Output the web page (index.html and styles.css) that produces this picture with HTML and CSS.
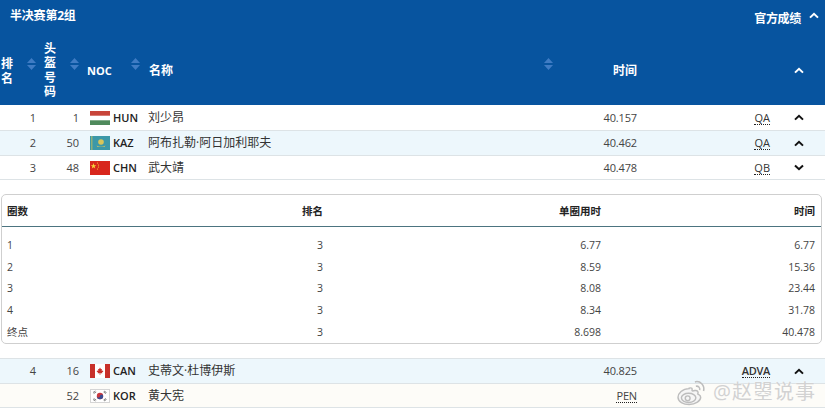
FILE: index.html
```html
<!DOCTYPE html>
<html lang="zh">
<head>
<meta charset="utf-8">
<title>半决赛第2组</title>
<link rel="stylesheet" href="styles.css">
</head>
<body>
<svg class="defs" width="0" height="0" aria-hidden="true">
  <symbol id="up" viewBox="0 0 10 7"><path d="M1 5.6 5 1.8l4 3.8" fill="none" stroke="currentColor" stroke-width="2"/></symbol>
  <symbol id="down" viewBox="0 0 10 7"><path d="M1 1.4 5 5.2l4-3.8" fill="none" stroke="currentColor" stroke-width="2"/></symbol>
  <symbol id="sort" viewBox="0 0 9 12"><path class="s-up" d="M4.5 0 9 5H0z"/><path class="s-down" d="M0 7h9l-4.500 5z"/></symbol>
</svg>
<main class="results">
  <header class="head">
    <div class="title-row">
      <h1 class="title">半决赛第2组</h1>
      <div class="official">官方成绩<svg class="chev chev-official"><use href="#up"/></svg></div>
    </div>
    <div class="col-row">
      <div class="th-rank">排名</div>
      <svg class="sort sort-active sort-a"><use href="#sort"/></svg>
      <div class="th-bib">头盔号码</div>
      <svg class="sort sort-b"><use href="#sort"/></svg>
      <div class="th-noc">NOC</div>
      <svg class="sort sort-c"><use href="#sort"/></svg>
      <div class="th-name">名称</div>
      <svg class="sort sort-d"><use href="#sort"/></svg>
      <div class="th-time">时间</div>
      <div class="cell-chev"><svg class="chev"><use href="#up"/></svg></div>
    </div>
  </header>

  <div class="row row-first">
    <div class="c-rank">1</div><div class="c-bib">1</div>
    <div class="c-flag"><svg class="flag" viewBox="0 0 20 14"><rect width="20" height="14" fill="#fff"/><rect width="20" height="4.700" fill="#c8453a"/><rect y="9.300" width="20" height="4.700" fill="#4f8a5c"/></svg></div>
    <div class="c-noc">HUN</div><div class="c-name">刘少昂</div><div class="c-time">40.157</div>
    <div class="c-code"><span class="abbr">QA</span></div>
    <div class="cell-chev"><svg class="chev"><use href="#up"/></svg></div>
  </div>
  <div class="row row-alt">
    <div class="c-rank">2</div><div class="c-bib">50</div>
    <div class="c-flag"><svg class="flag" viewBox="0 0 20 14"><rect width="20" height="14" fill="#3c98a8"/><rect x="1" width="1.500" height="14" fill="#8fb07a"/><circle cx="11" cy="6" r="2.800" fill="#d8c55a"/><path d="M6.500 9.500q4.500 2.500 9 0l-1 1.500h-7z" fill="#c9c263"/></svg></div>
    <div class="c-noc">KAZ</div><div class="c-name">阿布扎勒·阿日加利耶夫</div><div class="c-time">40.462</div>
    <div class="c-code"><span class="abbr">QA</span></div>
    <div class="cell-chev"><svg class="chev"><use href="#up"/></svg></div>
  </div>
  <div class="row row-short">
    <div class="c-rank">3</div><div class="c-bib">48</div>
    <div class="c-flag"><svg class="flag" viewBox="0 0 20 14"><rect width="20" height="14" fill="#d8261c"/><path d="M3.500 2 4.200 4.200 6.300 4.200 4.600 5.500 5.200 7.600 3.500 6.300 1.800 7.600 2.400 5.500.7 4.200 2.800 4.200z" fill="#f5d63a"/><circle cx="7.500" cy="2" r=".6" fill="#f5d63a"/><circle cx="8.500" cy="4" r=".6" fill="#f5d63a"/><circle cx="8.500" cy="6" r=".6" fill="#f5d63a"/><circle cx="7.500" cy="8" r=".6" fill="#f5d63a"/></svg></div>
    <div class="c-noc">CHN</div><div class="c-name">武大靖</div><div class="c-time">40.478</div>
    <div class="c-code"><span class="abbr">QB</span></div>
    <div class="cell-chev"><svg class="chev"><use href="#down"/></svg></div>
  </div>

  <section class="laps">
    <div class="lap lap-head"><div>圈数</div><div>排名</div><div>单圈用时</div><div>时间</div></div>
    <div class="lap-body">
      <div class="lap"><div>1</div><div>3</div><div>6.77</div><div>6.77</div></div>
      <div class="lap"><div>2</div><div>3</div><div>8.59</div><div>15.36</div></div>
      <div class="lap"><div>3</div><div>3</div><div>8.08</div><div>23.44</div></div>
      <div class="lap"><div>4</div><div>3</div><div>8.34</div><div>31.78</div></div>
      <div class="lap"><div>终点</div><div>3</div><div>8.698</div><div>40.478</div></div>
    </div>
  </section>

  <div class="row row-alt row-top">
    <div class="c-rank">4</div><div class="c-bib">16</div>
    <div class="c-flag"><svg class="flag" viewBox="0 0 20 14"><rect width="20" height="14" fill="#fff"/><rect width="5" height="14" fill="#c8302a"/><rect x="15" width="5" height="14" fill="#c8302a"/><path d="M10 3.500l1 1.800 1-.4-.3 2.100 1.300-.6.300 1-1.300 1 .3.800H10.300V11H9.700V9.200H7.700l.3-.8-1.300-1 .3-1 1.300.6-.3-2.100 1 .4z" fill="#c8302a"/></svg></div>
    <div class="c-noc">CAN</div><div class="c-name">史蒂文·杜博伊斯</div><div class="c-time">40.825</div>
    <div class="c-code"><span class="abbr abbr-strong">ADVA</span></div>
    <div class="cell-chev"><svg class="chev"><use href="#up"/></svg></div>
  </div>
  <div class="row row-warm">
    <div class="c-rank"></div><div class="c-bib">52</div>
    <div class="c-flag"><svg class="flag flag-kor" viewBox="0 0 20 14"><rect width="20" height="14" fill="#fff"/><circle cx="10" cy="7" r="3.200" fill="#c9383f"/><path d="M6.800 7a3.200 3.200 0 0 0 6.400 0 1.600 1.600 0 0 0-3.200 0 1.600 1.600 0 0 1-3.200 0z" fill="#3a4d92"/><path d="M3 3.500 5.500 2M3.700 4.500 6.200 3M14 2l2.500 1.500M13.500 3 16 4.500M3 10.500 5.500 12M3.700 9.500 6.200 11M14 12l2.500-1.500M13.500 11 16 9.500" stroke="#555" stroke-width=".7"/></svg></div>
    <div class="c-noc">KOR</div><div class="c-name">黄大宪</div><div class="c-time"><span class="abbr">PEN</span></div>
    <div class="c-code"></div>
    <div class="cell-chev"></div>
  </div>
</main>

<div class="mark">
  <svg class="mark-logo" viewBox="0 0 32 28"><g fill="#f6f6f6" stroke="#bdbdbd" stroke-width="1.500"><path d="M13 10C6 10 1.500 15 1.500 19c0 4.500 5.500 7.500 11.500 7.500 7 0 12-4 12-7.500 0-2.500-2.500-3-3-3.500 1-2.500-.5-4-3-3.500-2 .5-3 .5-3 0 .5-2 0-3.500-3-2.500z"/><ellipse cx="12.500" cy="19.500" rx="7.500" ry="4.800"/><circle cx="11.500" cy="20" r="2.500"/></g><path d="M19 3c5.500-1.500 10.500 3.500 9 9.500M20 7.500c2.500-.5 4.500 1.200 4 4" fill="none" stroke="#bdbdbd" stroke-width="1.600"/></svg>
  <span class="mark-text">@赵曌说事</span>
</div>
</body>
</html>
```

FILE: styles.css
```css
* { box-sizing: border-box; }
html, body { margin: 0; padding: 0; }
body {
  width: 826px;
  height: 414px;
  overflow: hidden;
  position: relative;
  background: #fff;
  color: #444;
  font: 12px/14px "Open Sans", "Noto Sans CJK SC", sans-serif;
}
.defs { position: absolute; }
.results { width: 825px; }

.head { height: 105px; background: #07549f; color: #fff; font-weight: 700; }
.title-row { display: flex; justify-content: space-between; height: 36px; padding: 8px 0 0 10px; }
.title { margin: 0; font-size: 12px; line-height: 15px; font-weight: 700; letter-spacing: -.2px; }
.official { display: flex; padding: 3px 6px 0 0; line-height: 15px; letter-spacing: -.3px; }
.chev { display: block; flex: none; width: 10px; height: 7px; }
.chev-official { margin: 1px 0 0 8px; }

.col-row { display: flex; align-items: center; height: 69px; }
.col-row > div { flex: none; }
.th-rank { width: 14px; margin-left: 1px; line-height: 15px; }
.sort { display: block; flex: none; width: 9px; height: 12px; margin-top: -13px; fill: #3f7cc4; }
.sort-active .s-up { fill: #fff; }
.sort-a { margin-left: 12px; }
.th-bib { width: 14px; margin-left: 8px; line-height: 14.500px; }
.sort-b { margin-left: 12px; }
.th-noc { width: 32px; margin-left: 8px; font-size: 11px; }
.sort-c { margin-left: 12px; }
.th-name { width: 395px; margin-left: 9px; }
.th-time { width: 84px; text-align: right; }
.col-row .cell-chev { margin-left: 133px; }

.row {
  display: flex;
  align-items: center;
  height: 25px;
  border-bottom: 1px solid #dde3e6;
  background: #fff;
}
.row-first { height: 26px; }
.row-short { height: 24px; }
.row-alt { background: #edf7fc; }
.row-top { border-top: 1px solid #dde3e6; height: 26px; }
.row-warm { background: #fdfcf8; height: 24px; }
.c-rank { width: 36px; text-align: right; font-size: 11px; }
.c-bib { width: 43px; text-align: right; font-size: 11px; }
.c-flag { width: 34px; padding-left: 11px; }
.flag { display: block; width: 20px; height: 14px; }
.flag-kor { outline: 1px solid #d5d5d5; outline-offset: -1px; }
.c-noc { width: 35px; color: #222; font-weight: 600; font-size: 11px; }
.c-name { width: 360px; color: #333; }
.c-time { width: 129px; text-align: right; font-size: 11px; letter-spacing: -.15px; }
.c-code { width: 133px; text-align: right; color: #333; font-size: 11px; }
.abbr { border-bottom: 1px dotted #222; line-height: 12px; display: inline-block; }
.abbr-strong { font-weight: 600; letter-spacing: -.3px; }
.cell-chev { flex: none; width: 55px; padding-left: 24px; color: #111; }
.head .cell-chev { color: #fff; }

.laps {
  width: 821px;
  height: 150px;
  margin: 14px 0 14px 1px;
  border: 1px solid #cfcfcf;
  border-radius: 5px;
  font-size: 10.500px;
  line-height: 14px;
}
.lap {
  display: grid;
  grid-template-columns: 269px 47px 278px 1fr;
  padding: 0 6px 0 5px;
  height: 21.750px;
  align-items: center;
}
.lap > div { text-align: right; }
.lap > div:first-child { text-align: left; }
.lap-head { height: 32px; border-bottom: 1px solid #4c7480; font-weight: 700; color: #222; }
.lap-body { padding-top: 7px; }

.mark {
  position: absolute;
  left: 676px;
  top: 378px;
  display: flex;
  align-items: center;
  gap: 5px;
  color: #d2d2d2;
}
.mark-logo { width: 32px; height: 27px; }
.mark-text { font-size: 20px; line-height: 28px; letter-spacing: 1px; text-shadow: 0 0 2px #fff; }
```
